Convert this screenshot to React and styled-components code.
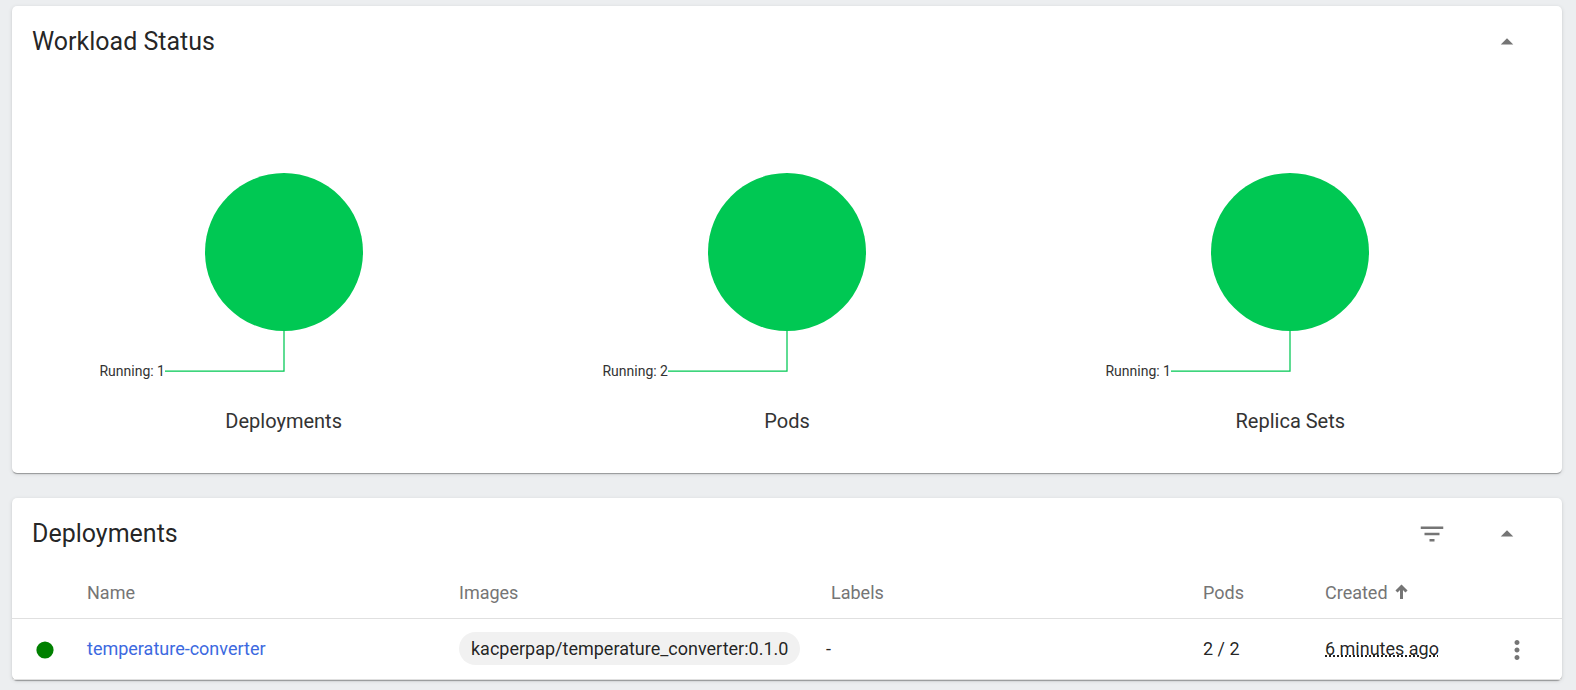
import React, { useState } from 'react';
import styled, { createGlobalStyle } from 'styled-components';

const GlobalStyle = createGlobalStyle`
  *, *::before, *::after { box-sizing: border-box; }
  body {
    margin: 0;
    background: #eceef0;
    color: rgba(0, 0, 0, 0.87);
    font-family: Roboto, "Liberation Sans", sans-serif;
    font-size: 18px;
  }
`;

const Page = styled.main`
  display: flex;
  flex-direction: column;
  gap: 25px;
  padding: 6px 14px 10px 12px;
`;

const Card = styled.section`
  background: #fff;
  border-radius: 5px;
  box-shadow: 0 2px 1px -1px rgba(0, 0, 0, 0.2), 0 1px 1px rgba(0, 0, 0, 0.14),
    0 1px 4px rgba(0, 0, 0, 0.12);
`;

const CardHeader = styled.header`
  display: flex;
  align-items: center;
  justify-content: space-between;
  height: 70px;
  padding: 2px 30px 0 20px;
`;

const CardTitle = styled.h2`
  margin: 0;
  font-size: 25px;
  font-weight: 400;
  line-height: 30px;
`;

const CardActions = styled.div`
  display: flex;
  gap: 25px;
`;

const IconButton = styled.button`
  display: flex;
  align-items: center;
  justify-content: center;
  width: 50px;
  height: 50px;
  padding: 0;
  border: 0;
  border-radius: 50%;
  background: none;
  color: #757575;
  cursor: pointer;
`;

const Icon = styled.svg`
  display: block;
  width: 30px;
  height: 30px;
  fill: currentColor;
`;

const Charts = styled.div`
  display: grid;
  grid-template-columns: repeat(3, 1fr);
  padding: 0 20px 39px;
`;

const Chart = styled.figure`
  display: flex;
  flex-direction: column;
  align-items: center;
  gap: 13px;
  margin: 0;
`;

const Pie = styled.svg`
  display: block;
  width: 400px;
  max-width: 100%;
  height: 320px;
  color: #00c853;
`;

const PieLabel = styled.text`
  fill: #333;
  font-size: 14px;
  text-anchor: end;
`;

const ChartName = styled.figcaption`
  color: #333;
  font-size: 20px;
  line-height: 25px;
`;

const Table = styled.table`
  width: 100%;
  border-collapse: separate;
  border-spacing: 0;
  table-layout: fixed;
`;

const HeadCell = styled.th`
  width: ${(p) => p.$width || 'auto'};
  height: 51px;
  padding: 0 0 2px;
  border-bottom: 1px solid #e0e0e0;
  color: #757575;
  font-weight: 400;
  text-align: left;
`;

const Cell = styled.td`
  height: 61px;
  padding: 0 0 2px;
  border-bottom: 1px solid #e0e0e0;
`;

const IconCell = styled(Cell)`
  padding: 1px 0 0 ${(p) => p.$indent};
`;

const SortButton = styled.button`
  display: flex;
  align-items: center;
  gap: 7px;
  padding: 0;
  border: 0;
  background: none;
  color: inherit;
  font: inherit;
  cursor: pointer;
`;

const SortArrow = styled.svg`
  width: 14px;
  height: 16px;
  fill: none;
  stroke: currentColor;
`;

const StatusIcon = styled.svg`
  display: block;
  width: 18px;
  height: 18px;
  fill: #008000;
`;

const NameLink = styled.a`
  color: #3c69e0;
  text-decoration: none;
`;

const ChipList = styled.div`
  display: flex;
  margin: 0 -5px;
`;

const Chip = styled.span`
  margin: 0 5px;
  padding: 0 12px;
  border-radius: 17px;
  background: #f1f1f1;
  line-height: 33px;
  white-space: nowrap;
`;

const Age = styled.span`
  text-decoration: underline dotted;
`;

const workloads = [
  { name: 'Deployments', running: 1 },
  { name: 'Pods', running: 2 },
  { name: 'Replica Sets', running: 1 },
];

const deployments = [
  {
    name: 'temperature-converter',
    images: ['kacperpap/temperature_converter:0.1.0'],
    labels: [],
    pods: '2 / 2',
    created: '6 minutes ago',
  },
];

function CollapseButton({ open, onClick }) {
  return (
    <IconButton type="button" aria-label="Toggle section" aria-expanded={open} onClick={onClick}>
      <Icon viewBox="0 0 24 24">
        <path d={open ? 'M7 14l5-5 5 5z' : 'M7 10l5 5 5-5z'} />
      </Icon>
    </IconButton>
  );
}

function WorkloadChart({ name, running }) {
  return (
    <Chart>
      <Pie viewBox="0 0 400 320" role="img" aria-label={`${name}, running: ${running}`}>
        <circle cx="200" cy="176" r="79" fill="currentColor" />
        <path d="M200 255V295H81" fill="none" stroke="currentColor" strokeWidth="1.25" />
        <PieLabel x="81" y="300">{`Running: ${running}`}</PieLabel>
      </Pie>
      <ChartName>{name}</ChartName>
    </Chart>
  );
}

function Chips({ items }) {
  return (
    <ChipList>
      {items.length ? items.map((item) => <Chip key={item}>{item}</Chip>) : '-'}
    </ChipList>
  );
}

export default function App() {
  const [statusOpen, setStatusOpen] = useState(true);
  const [listOpen, setListOpen] = useState(true);

  return (
    <>
      <GlobalStyle />
      <Page>
        <Card>
          <CardHeader>
            <CardTitle>Workload Status</CardTitle>
            <CardActions>
              <CollapseButton open={statusOpen} onClick={() => setStatusOpen(!statusOpen)} />
            </CardActions>
          </CardHeader>
          {statusOpen && (
            <Charts>
              {workloads.map((w) => (
                <WorkloadChart key={w.name} {...w} />
              ))}
            </Charts>
          )}
        </Card>

        <Card>
          <CardHeader>
            <CardTitle>Deployments</CardTitle>
            <CardActions>
              <IconButton type="button" aria-label="Filter">
                <Icon viewBox="0 0 24 24">
                  <path d="M10 18h4v-2h-4v2zM3 6v2h18V6H3zm3 7h12v-2H6v2z" />
                </Icon>
              </IconButton>
              <CollapseButton open={listOpen} onClick={() => setListOpen(!listOpen)} />
            </CardActions>
          </CardHeader>
          {listOpen && (
            <Table>
              <thead>
                <tr>
                  <HeadCell $width="75px" aria-label="Status" />
                  <HeadCell scope="col">Name</HeadCell>
                  <HeadCell scope="col">Images</HeadCell>
                  <HeadCell scope="col">Labels</HeadCell>
                  <HeadCell scope="col" $width="122px">Pods</HeadCell>
                  <HeadCell scope="col" $width="147px" aria-sort="ascending">
                    <SortButton type="button">
                      Created
                      <SortArrow viewBox="0 0 14 16" aria-hidden="true">
                        <path d="M6.500 15V2.500M1.500 7.500L6.500 2.500L11.500 7.500" strokeWidth="3" />
                      </SortArrow>
                    </SortButton>
                  </HeadCell>
                  <HeadCell $width="90px" aria-label="Actions" />
                </tr>
              </thead>
              <tbody>
                {deployments.map((d) => (
                  <tr key={d.name}>
                    <IconCell $indent="24px">
                      <StatusIcon viewBox="0 0 18 18" role="img" aria-label="Running">
                        <circle cx="9" cy="9" r="8.600" />
                      </StatusIcon>
                    </IconCell>
                    <Cell>
                      <NameLink href="#temperature-converter">{d.name}</NameLink>
                    </Cell>
                    <Cell><Chips items={d.images} /></Cell>
                    <Cell><Chips items={d.labels} /></Cell>
                    <Cell>{d.pods}</Cell>
                    <Cell><Age>{d.created}</Age></Cell>
                    <IconCell $indent="20px">
                      <IconButton type="button" aria-label="More actions">
                        <Icon viewBox="0 0 24 24">
                          <path d="M12 8c1.100 0 2-.9 2-2s-.9-2-2-2-2 .9-2 2 .9 2 2 2zm0 2c-1.100 0-2 .9-2 2s.9 2 2 2 2-.9 2-2-.9-2-2-2zm0 6c-1.100 0-2 .9-2 2s.9 2 2 2 2-.9 2-2-.9-2-2-2z" />
                        </Icon>
                      </IconButton>
                    </IconCell>
                  </tr>
                ))}
              </tbody>
            </Table>
          )}
        </Card>
      </Page>
    </>
  );
}
